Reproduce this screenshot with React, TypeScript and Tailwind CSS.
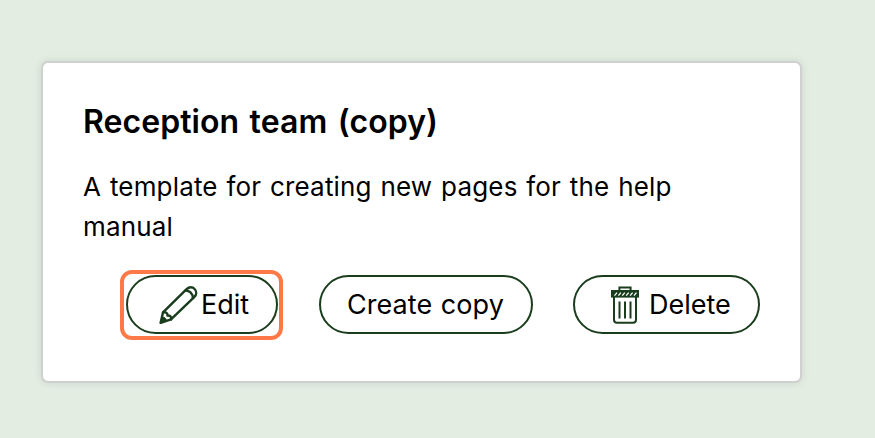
function PencilIcon() {
  return (
    <svg width="40" height="40" viewBox="0 0 40 40" fill="none" stroke="#1a3d1d" strokeWidth="2.4" strokeLinejoin="round" strokeLinecap="round" className="shrink-0">
      <path d="M2.6 37.8 L5 27.4 L28.6 4.2 C31.2 1.6 34.6 1.8 36.6 4 C38.8 6.2 38.8 9.6 36.2 12.2 L13 34.4 Z" />
      <path d="M5 27.4 C8 26.6 10 28.4 9.4 30.6 C12 30.2 13.8 32 13 34.4" />
      <path d="M27.4 5.6 C31.6 5.4 35 8.8 34.8 13.2" />
      <path d="M2.6 37.8 L4 32 C6.4 31.8 8.6 33.8 8.4 35.9 Z" fill="#1a3d1d" strokeWidth="1" />
    </svg>
  );
}

function TrashIcon() {
  return (
    <svg width="30" height="40" viewBox="0 0 30 40" fill="none" stroke="#1a3d1d" strokeWidth="2" className="shrink-0">
      <path d="M9.4 5.5 V2.5 H20.6 V5.5" />
      <rect x="2" y="6" width="26" height="5.6" fill="#1a3d1d" />
      <path d="M4.5 10.6 L7 7.6 M8.4 10.6 L10.9 7.6 M12.3 10.6 L14.8 7.6 M16.2 10.6 L18.7 7.6 M20.1 10.6 L22.6 7.6 M24 10.6 L26.5 7.6" stroke="#fff" strokeWidth="1.3" />
      <path d="M4 12 V34.8 Q4 37.8 7 37.8 H23 Q26 37.8 26 34.8 V12" />
      <path d="M9.5 16.5 V33.5 M15 16.5 V33.5 M20.5 16.5 V33.5" />
    </svg>
  );
}

const pill =
  "flex h-[59px] items-center rounded-full border-2 border-[#1a3d1d] bg-white text-[27px] leading-[40px] whitespace-nowrap";

export default function App() {
  return (
    <div className="h-[438px] w-[875px] bg-[#e3ede2] pt-[61px] pl-[41px] font-['Inter','Liberation_Sans',sans-serif] text-black">
      <main className="h-[322px] w-[761px] rounded-[7px] border-2 border-[#d0d0d0] bg-white pt-[35px] pl-[40px] shadow-[0_0_8px_rgba(0,0,0,0.1)]">
        <h1 className="h-[48px] text-[32px] leading-[48px] font-semibold tracking-[0.06px] [word-spacing:2.3px] whitespace-nowrap">
          Reception team (copy)
        </h1>
        <p className="mt-[21px] w-[620px] text-[26px] leading-[40px] tracking-[0.17px] [word-spacing:1.3px]">
          A template for creating new pages for the help manual
        </p>
        <div className="mt-[23px] ml-[37px] flex h-[70px] items-start">
          <div className="h-[70px] w-[163px] rounded-[12px] border-4 border-[#ff7847] pt-px pl-[2px]">
            <button className={`${pill} w-[152px] pl-[30px]`}>
              <PencilIcon />
              <span className="ml-[3px]">Edit</span>
            </button>
          </div>
          <button className={`${pill} mt-[5px] ml-[36px] w-[214px] pl-[26px] tracking-[0.05px] [word-spacing:1px]`}>Create copy</button>
          <button className={`${pill} mt-[5px] ml-[40px] w-[187px] pl-[35px]`}>
            <TrashIcon />
            <span className="ml-[9px]">Delete</span>
          </button>
        </div>
      </main>
    </div>
  );
}
